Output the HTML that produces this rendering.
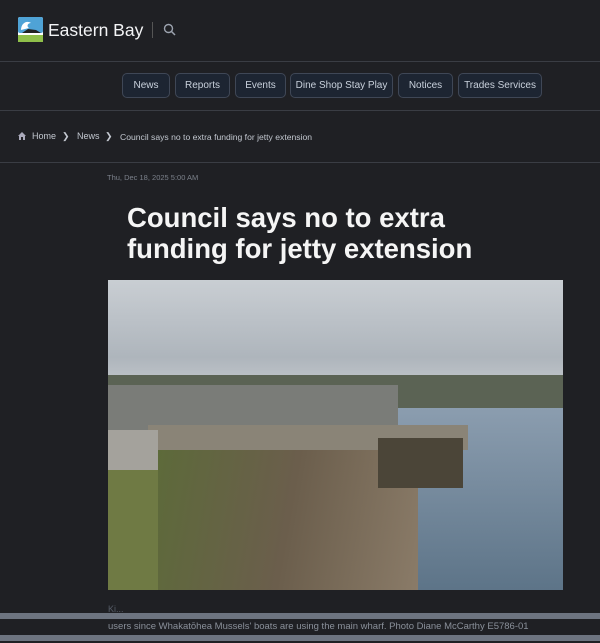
<!DOCTYPE html>
<html><head><style>
*{margin:0;padding:0;box-sizing:border-box}
body{width:600px;height:643px;overflow:hidden;background:#1f2024;font-family:"Liberation Sans",sans-serif;color:#e5e7eb;position:relative}
.hr{position:absolute;left:0;width:600px;height:1px;background:#3a3d44}
.btn{position:absolute;top:73px;height:25px;border:1px solid #3f4756;border-radius:5px;background:#1d2532;color:#c9d1dc;font-size:10px;line-height:23px;text-align:center}
.bc{position:absolute;top:131px;font-size:9px;color:#c3c8d0}
</style></head><body>
<svg style="position:absolute;left:18px;top:17px" width="25" height="25" viewBox="0 0 25 25">
<rect width="25" height="25" rx="2" fill="#fff"/>
<rect width="25" height="16" rx="2" fill="#4fa3d6"/>
<path d="M3 13 C3 6,9 3,13 6 C10 6,8 9,11 11 L3 13Z" fill="#fff"/>
<path d="M4 16 L10 12 L18 13 L23 16Z" fill="#222"/>
<rect y="18" width="25" height="7" fill="#8fbf4a"/>
</svg>
<div style="position:absolute;left:48px;top:20px;font-size:17.5px;color:#f3f4f6">Eastern Bay</div>
<div style="position:absolute;left:152px;top:22px;width:1px;height:16px;background:#555"></div>
<svg style="position:absolute;left:163px;top:23px" width="14" height="14" viewBox="0 0 14 14"><circle cx="5.5" cy="5.5" r="4" stroke="#9ca3af" stroke-width="1.4" fill="none"/><path d="M8.5 8.5L12 12" stroke="#9ca3af" stroke-width="1.5"/></svg>
<div class="hr" style="top:61px"></div>
<div class="btn" style="left:122px;width:48px">News</div>
<div class="btn" style="left:175px;width:55px">Reports</div>
<div class="btn" style="left:235px;width:51px">Events</div>
<div class="btn" style="left:290px;width:103px">Dine Shop Stay Play</div>
<div class="btn" style="left:398px;width:55px">Notices</div>
<div class="btn" style="left:458px;width:84px">Trades Services</div>
<div class="hr" style="top:110px"></div>
<svg style="position:absolute;left:18px;top:132px" width="8" height="8" viewBox="0 0 8 8"><path d="M0 4L4 0L8 4H7V8H5V5H3V8H1V4Z" fill="#aab"/></svg>
<div class="bc" style="left:32px">Home</div>
<div class="bc" style="left:62px">&#x276F;</div>
<div class="bc" style="left:77px">News</div>
<div class="bc" style="left:105px">&#x276F;</div>
<div class="bc" style="left:120px;font-size:8.6px;top:131.5px">Council says no to extra funding for jetty extension</div>
<div class="hr" style="top:162px"></div>
<div style="position:absolute;left:107px;top:173px;font-size:7.5px;color:#7b808a">Thu, Dec 18, 2025 5:00 AM</div>
<div style="position:absolute;left:127px;top:202px;font-size:27.5px;font-weight:bold;line-height:31px;color:#f5f5f5">Council says no to extra<br>funding for jetty extension</div>
<div style="position:absolute;left:108px;top:280px;width:455px;height:310px;overflow:hidden;background:linear-gradient(#c9ced3 0%,#aeb5bc 25%,#bfc4c9 33%,#9aa0a4 36%)">
<div style="position:absolute;left:0;top:95px;width:455px;height:40px;background:#5b6354"></div>
<div style="position:absolute;left:260px;top:128px;width:195px;height:182px;background:linear-gradient(#8b9daf,#5d7488)"></div>
<div style="position:absolute;left:0;top:105px;width:290px;height:50px;background:#7a7c78"></div>
<div style="position:absolute;left:40px;top:145px;width:320px;height:25px;background:#8a8477"></div>
<div style="position:absolute;left:0;top:150px;width:50px;height:160px;background:#a4a29c"></div>
<div style="position:absolute;left:0;top:190px;width:60px;height:120px;background:#6f7a44"></div>
<div style="position:absolute;left:50px;top:170px;width:260px;height:140px;background:linear-gradient(100deg,#5d6a3a,#6b5e4c 50%,#8a7b68)"></div>
<div style="position:absolute;left:270px;top:158px;width:85px;height:50px;background:#4b4538"></div>
</div>
<div style="position:absolute;left:108px;top:604px;font-size:9px;color:#555b66">Ki...</div>
<div style="position:absolute;left:0;top:613px;width:600px;height:6px;background:#6d7480"></div>
<div style="position:absolute;left:0;top:619px;width:600px;height:16px;background:#1f2024"></div>
<div style="position:absolute;left:108px;top:621px;font-size:9.5px;color:#8a909a">users since Whakatōhea Mussels' boats are using the main wharf. Photo Diane McCarthy E5786-01</div>
<div style="position:absolute;left:0;top:635px;width:600px;height:6px;background:#6d7480"></div>
</body></html>
